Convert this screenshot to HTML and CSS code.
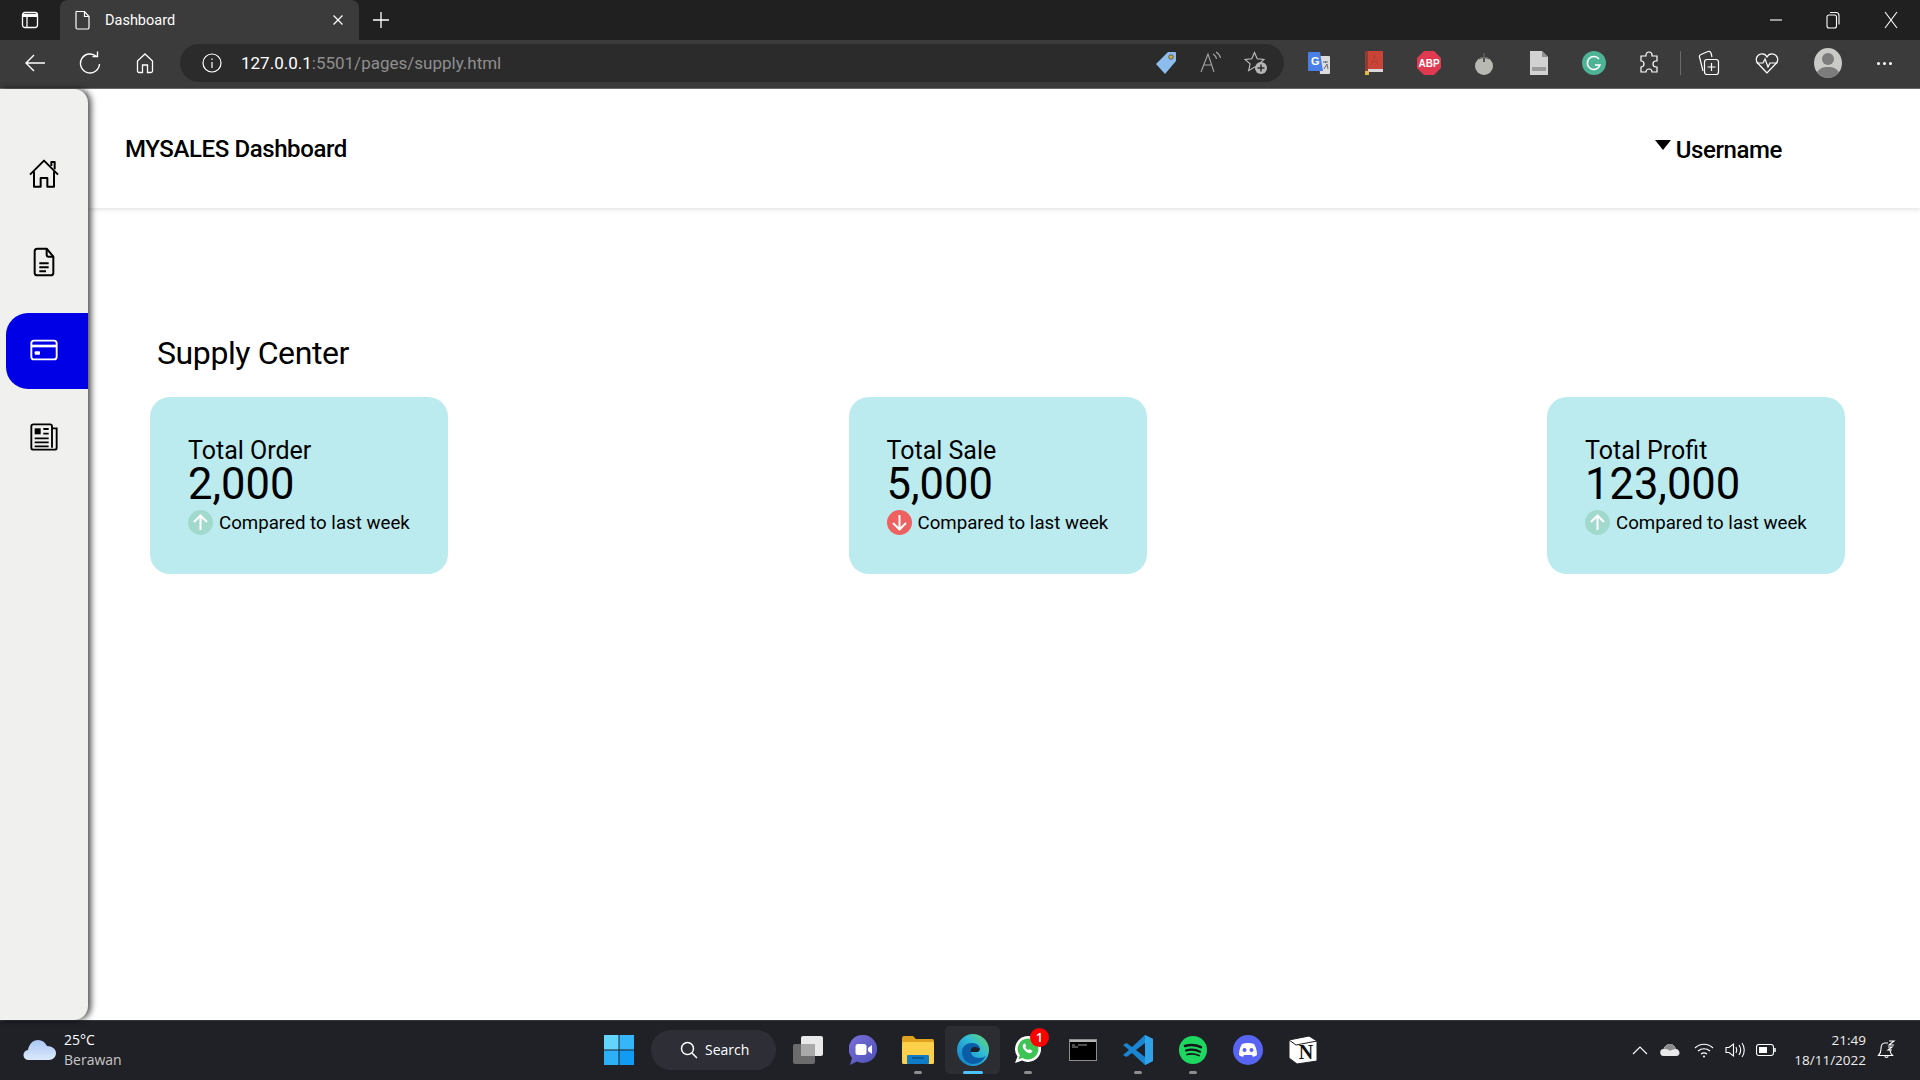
FILE: index.html
```html
<!DOCTYPE html>
<html lang="en">
<head>
    <meta charset="UTF-8">
    <title>Dashboard</title>
    <link rel="stylesheet" href="styles.css">
</head>
<body>
    <div class="tabbar">
        <div class="tab-toggle">
            <svg class="ico" width="20" height="20" viewBox="0 0 20 20" fill="none" stroke="#fff" stroke-width="1.3"><rect x="2.5" y="2.5" width="15" height="15" rx="2.5"/><path d="M2.5 5.5h15" stroke-width="3"/><path d="M7 6v11"/></svg>
        </div>
        <div class="tab">
            <svg class="ico" width="16" height="20" viewBox="0 0 16 20" fill="none" stroke="#fff" stroke-width="1.2"><path d="M2.5 1.5h7l4.500 5v11a1.500 1.500 0 0 1-1.500 1.500h-10a1.500 1.500 0 0 1-1.500-1.500v-15a1 1 0 0 1 1.500-1z"/><path d="M9.500 1.500v5h4.500"/></svg>
            <span class="tab-title">Dashboard</span>
            <svg class="tab-close" width="12" height="12" viewBox="0 0 12 12" stroke="#fff" stroke-width="1.200"><path d="M1.500 1.500l9 9M10.500 1.500l-9 9"/></svg>
        </div>
        <svg class="tab-new" width="18" height="18" viewBox="0 0 18 18" stroke="#fff" stroke-width="1.300"><path d="M9 1v16M1 9h16"/></svg>
        <div class="win-btns">
            <svg width="12" height="12" viewBox="0 0 12 12" stroke="#fff" stroke-width="1.100"><path d="M0 6h12"/></svg>
            <svg width="14" height="18" viewBox="0 0 14 18" fill="none" stroke="#fff" stroke-width="1.100"><rect x="1" y="4" width="9.500" height="13" rx="2"/><path d="M4 1.500h6a3 3 0 0 1 3 3v9"/></svg>
            <svg width="14" height="18" viewBox="0 0 14 18" stroke="#fff" stroke-width="1.100"><path d="M1 1l12 16M13 1L1 17"/></svg>
        </div>
    </div>

    <div class="toolbar">
        <div class="tool">
            <svg width="22" height="22" viewBox="0 0 22 22" fill="none" stroke="#fff" stroke-width="1.400"><path d="M21 11H2M10 3l-8 8 8 8"/></svg>
        </div>
        <div class="tool">
            <svg width="22" height="24" viewBox="0 0 22 24" fill="none" stroke="#fff" stroke-width="1.400"><path d="M17.500 5.500A9.500 9.500 0 1 0 20.500 13"/><path d="M13.500 5.500h5v-5"/></svg>
        </div>
        <div class="tool">
            <svg width="20" height="22" viewBox="0 0 20 22" fill="none" stroke="#fff" stroke-width="1.300"><path d="M10 2l7.500 7v10a1.500 1.500 0 0 1-1.500 1.500h-3.500V13h-5v7.500H4A1.500 1.500 0 0 1 2.500 19V9z"/></svg>
        </div>
        <div class="omnibox">
            <svg class="omni-info" width="20" height="20" viewBox="0 0 20 20" fill="none" stroke="#fff" stroke-width="1.200"><circle cx="10" cy="10" r="9"/><path d="M10 9v6M10 5.500v1.500"/></svg>
            <span class="url"><span class="url-host">127.0.0.1</span>:5501/pages/supply.html</span>
            <div class="omni-tools">
                <div class="omni-tool">
                    <svg width="22" height="24" viewBox="0 0 22 24"><path d="M13 1h7a1 1 0 0 1 1 1v8L10 23 1 13z" fill="#8cbdec"/><circle cx="16" cy="6" r="2.200" fill="#d8b23c" stroke="#333" stroke-width=".7"/></svg>
                </div>
                <div class="omni-tool">
                    <svg width="24" height="22" viewBox="0 0 24 22" fill="none" stroke="#a8a8a8" stroke-width="1.100"><path d="M2 21L9 3l6 18M5 14h8"/><path d="M14 3c2 1 3 2.500 3.500 5M17 1c2.500 1.500 4 3.500 4.500 6"/></svg>
                </div>
                <div class="omni-tool">
                    <svg width="24" height="24" viewBox="0 0 24 24" fill="none" stroke="#c0c0c0" stroke-width="1.100"><path d="M10.500 1.500l2.700 6.300 6.800.600-5.100 4.500 1.500 6.700-5.900-3.500-5.900 3.500 1.500-6.700L1 8.400l6.800-.600z"/><circle cx="17" cy="17" r="6" fill="#b5b5b5" stroke="none"/><path d="M17 13.500v7M13.500 17h7" stroke="#2b2b2b" stroke-width="1.500"/></svg>
                </div>
            </div>
        </div>
        <div class="tool ext-first">
            <svg width="24" height="24" viewBox="0 0 24 24"><path d="M12 5h10a1 1 0 0 1 1 1v16a1 1 0 0 1-1 1H13z" fill="#dcdcdc"/><path d="M2 1h11l3 19H2a1 1 0 0 1-1-1V2a1 1 0 0 1 1-1z" fill="#4a7fe8"/><text class="ext-g" x="4" y="14">G</text><path d="M16 11h5M18.500 10v2M17 18l3-5 1 5" stroke="#667" stroke-width="1" fill="none"/></svg>
        </div>
        <div class="tool">
            <svg width="20" height="24" viewBox="0 0 20 24"><rect x="1" y="0" width="18" height="20" fill="#c94436"/><rect x="1" y="0" width="3" height="22" fill="#8a3d34"/><rect x="4" y="18" width="15" height="3" fill="#d8d8d8"/><rect x="1" y="20" width="4" height="4" fill="#e8b93a"/><path d="M7 14l3.500-10L14 14M8.500 10.500h4" stroke="#b33c2f" fill="none"/></svg>
        </div>
        <div class="tool">
            <svg width="24" height="24" viewBox="0 0 24 24"><path d="M7 0h10l7 7v10l-7 7H7l-7-7V7z" fill="#e03a50"/><text class="ext-abp" x="12" y="16" text-anchor="middle">ABP</text></svg>
        </div>
        <div class="tool">
            <svg width="20" height="24" viewBox="0 0 20 24"><ellipse cx="10" cy="15" rx="9" ry="9" fill="#b9b9b4"/><path d="M10 2v9" stroke="#555" stroke-width="2"/><path d="M5 8c2-2 8-2 10 0" stroke="#666" stroke-width="1.500" fill="none"/></svg>
        </div>
        <div class="tool">
            <svg width="18" height="24" viewBox="0 0 18 24"><path d="M0 0h12l6 6v18H0z" fill="#d2d2d2"/><path d="M12 0l6 6h-6z" fill="#8f8f8f"/><rect x="2" y="16" width="14" height="4" fill="#9a9a9a"/></svg>
        </div>
        <div class="tool">
            <svg width="24" height="24" viewBox="0 0 24 24" fill="none"><circle cx="12" cy="12" r="12" fill="#4db394"/><path d="M17 8a6.500 6.500 0 1 0 1 6h-5" stroke="#fff" stroke-width="1.600"/></svg>
        </div>
        <div class="tool">
            <svg width="22" height="24" viewBox="0 0 22 24" fill="none" stroke="#fff" stroke-width="1.200"><path d="M8 4a3 3 0 0 1 6 0v1h5v5h-1a3 3 0 0 0 0 6h1v5h-5a3 3 0 0 0-6 0H3v-5a3 3 0 0 0 0-6V5h5z"/></svg>
        </div>
        <div class="tool-sep"></div>
        <div class="tool tool-coll">
            <svg width="22" height="26" viewBox="0 0 22 26" fill="none" stroke="#fff" stroke-width="1.200"><path d="M5 21L1.500 7a2 2 0 0 1 1.500-2.500l7-3c1.500-.500 2.500 0 3 1.500l1 4"/><rect x="6.500" y="9.500" width="14" height="15" rx="2.500"/><path d="M13.500 13v8M9.500 17h8"/></svg>
        </div>
        <div class="tool tool-health">
            <svg width="24" height="24" viewBox="0 0 24 24" fill="none" stroke="#fff" stroke-width="1.200"><path d="M12 22L3 12.500C0 9.500 1 4 6 3c3-.500 5 1 6 3 1-2 3-3.500 6-3 5 1 6 6.500 3 9.500z"/><path d="M1.500 12H8l2-4 3 8 2-4h7.500"/></svg>
        </div>
        <div class="avatar">
            <svg width="28" height="30" viewBox="0 0 28 30"><ellipse cx="14" cy="15" rx="14" ry="15" fill="#c9c9c6"/><circle cx="14" cy="11" r="6" fill="#7c7c7c"/><path d="M3 25c2-5 6-6 11-6s9 1 11 6c-3 3-7 5-11 5s-8-2-11-5z" fill="#7c7c7c"/></svg>
        </div>
        <div class="dots"><i></i><i></i><i></i></div>
    </div>

    <div class="page">
        <nav class="sidebar">
            <a class="side-item">
                <svg width="32" height="32" viewBox="0 0 24 24" fill="none" stroke="#000" stroke-width="1.500" stroke-linejoin="round"><path d="M1.500 12.500L12 2l10.500 10.500"/><path d="M4.500 10v11.500h5V15h5v6.500h5V10"/><path d="M17.500 6V3H20v5.500"/></svg>
            </a>
            <a class="side-item">
                <svg width="32" height="32" viewBox="0 0 24 24" fill="none" stroke="#000" stroke-width="1.500" stroke-linejoin="round"><path d="M14 2H7a2 2 0 0 0-2 2v16a2 2 0 0 0 2 2h10a2 2 0 0 0 2-2V8z"/><path d="M14 2v4.500a1.500 1.500 0 0 0 1.500 1.500H19M8.500 13h7M8.500 16h7M8.500 19h5"/></svg>
            </a>
            <a class="side-item side-item-active">
                <svg width="32" height="32" viewBox="0 0 24 24" fill="none" stroke="#fff" stroke-width="1.400"><rect x="2.500" y="5" width="19" height="14" rx="2"/><path d="M2.500 9h19" stroke-width="2"/><rect x="5" y="13" width="4" height="2.500" rx=".7" fill="#fff" stroke="none"/></svg>
            </a>
            <a class="side-item">
                <svg width="32" height="32" viewBox="0 0 24 24" fill="none" stroke="#000" stroke-width="1.400"><path d="M18 5.500V4a1.500 1.500 0 0 0-1.500-1.500H4A1.500 1.500 0 0 0 2.500 4v16A1.500 1.500 0 0 0 4 21.500h16a1.500 1.500 0 0 0 1.500-1.500V5.500H18v14.500"/><rect x="5" y="5.500" width="4.500" height="4.500" fill="#000" stroke="none"/><path d="M11.500 6h4M11.500 9.500h4M5 13h10.500M5 16h10.500M5 19h10.500"/></svg>
            </a>
        </nav>
        <main class="content">
            <header class="topbar">
                <div class="brand">MYSALES Dashboard</div>
                <div class="user"><span class="caret"></span>Username</div>
            </header>
            <h2 class="page-title">Supply Center</h2>
            <section class="cards">
                <div class="card">
                    <div class="card-label">Total Order</div>
                    <div class="card-value">2,000</div>
                    <div class="card-note">
                        <svg class="trend" width="25" height="25" viewBox="0 0 25 25"><circle cx="12.500" cy="12.500" r="12.500" fill="#a2d9cd"/><path d="M12.500 20V6M6 12l6.500-6.500L19 12" fill="none" stroke="#fff" stroke-width="2"/></svg>
                        Compared to last week
                    </div>
                </div>
                <div class="card">
                    <div class="card-label">Total Sale</div>
                    <div class="card-value">5,000</div>
                    <div class="card-note">
                        <svg class="trend" width="25" height="25" viewBox="0 0 25 25"><circle cx="12.500" cy="12.500" r="12.500" fill="#ee6161"/><path d="M12.500 5v14M6 13l6.500 6.500L19 13" fill="none" stroke="#fff" stroke-width="2"/></svg>
                        Compared to last week
                    </div>
                </div>
                <div class="card">
                    <div class="card-label">Total Profit</div>
                    <div class="card-value">123,000</div>
                    <div class="card-note">
                        <svg class="trend" width="25" height="25" viewBox="0 0 25 25"><circle cx="12.500" cy="12.500" r="12.500" fill="#a2d9cd"/><path d="M12.500 20V6M6 12l6.500-6.500L19 12" fill="none" stroke="#fff" stroke-width="2"/></svg>
                        Compared to last week
                    </div>
                </div>
            </section>
        </main>
    </div>

    <footer class="taskbar">
        <div class="weather">
            <svg width="34" height="22" viewBox="0 0 34 22"><defs><linearGradient id="cloud" x1="0" y1="0" x2="0" y2="1"><stop offset="0" stop-color="#a9c8f5"/><stop offset="1" stop-color="#dbe8fb"/></linearGradient></defs><path d="M6 21a5 5 0 0 1-1-10C6 5 10 1 15 1c4 0 7 2 9 6 5 0 9 3 9 7s-3 7-7 7z" fill="url(#cloud)"/></svg>
            <div class="weather-text">
                <div class="weather-temp">25°C</div>
                <div class="weather-desc">Berawan</div>
            </div>
        </div>
        <div class="task-apps">
            <svg class="start" width="30" height="30" viewBox="0 0 30 30"><rect width="14.500" height="14.500" fill="#63d4fb"/><rect x="15.500" width="14.500" height="14.500" fill="#36b6f8"/><rect y="15.500" width="14.500" height="14.500" fill="#2db0f7"/><rect x="15.500" y="15.500" width="14.500" height="14.500" fill="#129bf3"/></svg>
            <div class="search">
                <svg width="18" height="18" viewBox="0 0 18 18" fill="none" stroke="#fff" stroke-width="1.500"><circle cx="7.500" cy="7.500" r="6"/><path d="M12 12l5 5"/></svg>
                <span>Search</span>
            </div>
            <div class="app app-tasks">
                <svg width="30" height="28" viewBox="0 0 30 28"><rect x="0" y="8" width="22" height="20" rx="2" fill="#6b6b6b"/><rect x="8" y="0" width="22" height="20" rx="2" fill="#e9e9e9"/><rect x="8" y="8" width="14" height="12" fill="#a9a9a9"/></svg>
            </div>
            <div class="app">
                <svg width="28" height="30" viewBox="0 0 28 30"><defs><linearGradient id="chat" x1="0" y1="0" x2="1" y2="1"><stop offset="0" stop-color="#7b6fd8"/><stop offset="1" stop-color="#4c4fb8"/></linearGradient></defs><path d="M14 0a14 14 0 1 1-6 26.600L1 30l2-7A14 14 0 0 1 14 0z" fill="url(#chat)"/><rect x="6.500" y="9" width="11" height="11" rx="2.500" fill="#fff"/><path d="M19 13l4-3v9l-4-3z" fill="#fff"/></svg>
            </div>
            <div class="app">
                <svg width="32" height="28" viewBox="0 0 32 28"><path d="M0 2a2 2 0 0 1 2-2h9l3 3h16a2 2 0 0 1 2 2v4H0z" fill="#e0a21f"/><rect y="6" width="32" height="22" rx="1.500" fill="#fbd14b"/><rect x="5" y="19" width="22" height="9" rx="1" fill="#0f7cc8"/><path d="M10 22h12" stroke="#0b4f85" stroke-width="1.500"/></svg>
                <i class="app-dot"></i>
            </div>
            <div class="app app-active">
                <svg width="32" height="32" viewBox="0 0 32 32"><defs><linearGradient id="edge" x1="0" y1="1" x2="1" y2="0"><stop offset="0" stop-color="#1278c8"/><stop offset=".6" stop-color="#2fbcd8"/><stop offset="1" stop-color="#6ed65a"/></linearGradient></defs><circle cx="16" cy="16" r="16" fill="url(#edge)"/><path d="M5 18c0-6 5-9 10-9 5 0 8 3 8 6 0 2-2 3-4 3h-5c0 3 3 6 8 6 3 0 5-1 7-2-3 5-7 8-13 8C10 30 5 25 5 18z" fill="#0c5da8"/><path d="M14 18c-1-3 1-5 4-5 2 0 4 1 5 2l-2 3z" fill="#1d2027"/></svg>
                <i class="app-dot app-dot-active"></i>
            </div>
            <div class="app">
                <svg width="28" height="30" viewBox="0 0 28 30"><path d="M14 1a13 13 0 1 1-6 24.500L1 28l2.500-6.500A13 13 0 0 1 14 1z" fill="#fff"/><path d="M14 3.500a10.500 10.500 0 1 1-5.500 19.500l-4 1.200 1.300-4A10.500 10.500 0 0 1 14 3.500z" fill="#3ec454"/><path d="M9.500 9c-1.500 1.500-1 4 1.500 6.500s5 3.500 6.500 2l1-1.500-3-2-1.200 1c-1.500-.500-2.500-1.800-3-3l1-1.200-1.500-2.500z" fill="#fff"/></svg>
                <span class="app-badge">1</span>
                <i class="app-dot"></i>
            </div>
            <div class="app">
                <svg width="28" height="22" viewBox="0 0 28 22"><rect width="28" height="22" fill="#8d8d8d"/><rect x="1" y="1" width="26" height="20" fill="#000"/><rect x="1" y="1" width="26" height="2" fill="#b5b5b5"/><path d="M3 6h3M3 8h6M9 6h9" stroke="#9a9a9a"/></svg>
            </div>
            <div class="app">
                <svg width="30" height="30" viewBox="0 0 30 30"><path d="M22 0l8 4v22l-8 4-13-12-5.500 4L0 20l6-5-6-5 3.500-2L9 12z" fill="#1a85d0"/><path d="M22 8v14l-9-7z" fill="#1d2027"/><path d="M22 0l8 4v22l-8 4z" fill="#2ea3ec"/></svg>
                <i class="app-dot"></i>
            </div>
            <div class="app">
                <svg width="28" height="28" viewBox="0 0 28 28" fill="none" stroke="#14161a"><circle cx="14" cy="14" r="14" fill="#1ed760" stroke="none"/><path d="M6 10c5-1.500 11-1.200 16 1.200" stroke-width="2.500" stroke-linecap="round"/><path d="M7 14.500c4.500-1.200 10-.800 14 1.200" stroke-width="2.200" stroke-linecap="round"/><path d="M8 18.500c4-1 8-.600 12 1" stroke-width="1.800" stroke-linecap="round"/></svg>
                <i class="app-dot"></i>
            </div>
            <div class="app">
                <svg width="30" height="30" viewBox="0 0 30 30"><circle cx="15" cy="15" r="15" fill="#5865f2"/><path d="M9 9c4-1.500 8-1.500 12 0 2 3 3 7 3 11-1.500 1-3 1.500-4 2l-1-2h-8l-1 2c-1-.500-2.500-1-4-2 0-4 1-8 3-11z" fill="#fff"/><circle cx="11.500" cy="15" r="2" fill="#5865f2"/><circle cx="18.500" cy="15" r="2" fill="#5865f2"/></svg>
            </div>
            <div class="app">
                <svg width="30" height="30" viewBox="0 0 30 30"><path d="M1 5l20-4 8 5v20l-20 3-8-6z" fill="#fff" stroke="#222"/><path d="M1 5l7 5 21-4" fill="none" stroke="#222"/><text class="notion-n" x="18" y="24" text-anchor="middle">N</text></svg>
            </div>
        </div>
        <div class="tray">
            <svg class="tray-chevron" width="16" height="10" viewBox="0 0 16 10" fill="none" stroke="#fff" stroke-width="1.100"><path d="M1 9l7-7 7 7"/></svg>
            <svg class="tray-cloud" width="20" height="14" viewBox="0 0 20 14"><path d="M4 13a3.500 3.500 0 0 1-.500-7C4.500 3 7 1 10 1c3 0 5 2 6 5 2 0 3.500 2 3.500 4s-1.500 3-3 3z" fill="#e8e8e8"/><path d="M4 6c1-3 3-5 6-5 3 0 5 2 6 5-3 0-5 1-6 2-1-1.500-3-2-6-2z" fill="#8b8b8b"/></svg>
            <svg class="tray-wifi" width="20" height="16" viewBox="0 0 20 16" fill="none" stroke="#fff" stroke-width="1.200"><path d="M1 6c5-5 13-5 18 0M4 9c3.500-3 8.500-3 12 0M7 12c1.800-1.400 4.200-1.400 6 0"/><circle cx="10" cy="14.500" r="1" fill="#fff" stroke="none"/></svg>
            <svg class="tray-vol" width="20" height="16" viewBox="0 0 20 16" fill="none" stroke="#fff" stroke-width="1.100"><path d="M1 5.500h3L8.500 2v12L4 10.500H1z"/><path d="M11 5c1 2 1 4 0 6M14 3c2 3 2 7 0 10M17 1c3 4 3 10 0 14"/></svg>
            <svg class="tray-batt" width="20" height="12" viewBox="0 0 20 12" fill="none" stroke="#fff" stroke-width="1.100"><rect x=".5" y=".5" width="17" height="11" rx="2.500"/><rect x="3" y="3" width="8" height="6" fill="#fff" stroke="none"/><path d="M19 4v4" stroke-width="1.500"/></svg>
            <div class="clock">
                <div>21:49</div>
                <div>18/11/2022</div>
            </div>
            <svg class="tray-bell" width="20" height="20" viewBox="0 0 20 20" fill="none" stroke="#fff" stroke-width="1.100"><path d="M11 3H8C5 3 4 6 4 9c0 3-1 5-2.500 6.500h14C14 14 13 12 13 10"/><path d="M8 16c0 2 3 2 3 0"/><path d="M12 1h5l-5 4h5M11 7h4l-4 3h4"/></svg>
        </div>
    </footer>
</body>
</html>
```

FILE: styles.css
```css
* { box-sizing: border-box; }
html, body { height: 100%; }
body { margin: 0; display: flex; flex-direction: column; height: 100vh; overflow: hidden; background: #fff; color: #000; font-family: Roboto, "Noto Sans", sans-serif; }
svg { display: block; flex: none; }

/* browser chrome */
.tabbar { height: 40px; background: #202020; display: flex; align-items: center; }
.tab-toggle { width: 60px; height: 40px; display: flex; align-items: center; justify-content: center; }
.tab { width: 299px; height: 40px; background: #3b3b3b; border-radius: 8px 8px 0 0; display: flex; align-items: center; padding: 0 15px 0 15px; }
.tab-title { color: #fff; font-size: 14.5px; margin-left: 14px; flex: 1; }
.tab-new { margin-left: 13px; }
.win-btns { margin-left: auto; width: 174px; display: flex; align-items: center; justify-content: space-between; padding: 0 22px 0 24px; }

.toolbar { height: 49px; background: #3b3b3b; border-bottom: 1px solid #6b6b6b; display: flex; align-items: center; padding-left: 7px; padding-bottom: 2px; }
.tool { width: 55px; height: 40px; display: flex; align-items: center; justify-content: center; }
.ext-first { margin-left: 7px; }
.tool-health { margin-left: 3px; }
.tool-sep { width: 1px; height: 24px; background: #6b6b6b; margin-left: 4px; margin-right: 0; }
.omnibox { width: 1104px; height: 38px; margin-left: 8px; background: #2b2b2b; border-radius: 19px; display: flex; align-items: center; padding-left: 22px; }
.url { margin-left: 19px; color: #8f8f8f; font-size: 17px; }
.url-host { color: #fff; }
.omni-tools { margin-left: auto; display: flex; padding-right: 6px; }
.omni-tool { width: 45px; display: flex; justify-content: center; }
.avatar { margin-left: 20px; width: 28px; }
.dots { margin-left: 35px; display: flex; gap: 3px; }
.dots i { width: 3px; height: 3px; border-radius: 50%; background: #fff; }
.ext-g { font: 700 11px "Liberation Sans", sans-serif; fill: #fff; }
.ext-abp { font: 700 10px "Liberation Sans", sans-serif; fill: #fff; }
.notion-n { font: 700 20px "Liberation Serif", serif; fill: #111; }

/* page */
.page { flex: 1; display: flex; min-height: 0; }
.sidebar { width: 88px; flex: none; background: #f0f0ee; border-radius: 0 14px 14px 0; box-shadow: 3px 0 6px rgba(0, 0, 0, 0.7); padding: 47px 0 0 6px; display: flex; flex-direction: column; gap: 13px; position: relative; z-index: 1; }
.side-item { height: 75px; display: flex; align-items: center; justify-content: center; padding-right: 7px; border-radius: 22px 0 0 22px; }
.side-item-active { height: 76px; background: #0000e6; margin: 1px 0 -3px; padding-bottom: 3px; }
.content { flex: 1; min-width: 0; }
.topbar { height: 119px; display: flex; align-items: center; justify-content: space-between; padding: 0 138px 0 37px; box-shadow: 0 2px 4px rgba(0, 0, 0, 0.1); }
.brand, .user { font-size: 24px; font-weight: 500; letter-spacing: -0.4px; }
.user { display: flex; align-items: center; position: relative; padding-top: 2px; }
.caret { width: 0; height: 0; border-left: 8px solid transparent; border-right: 8px solid transparent; border-top: 10px solid #000; margin-right: 5px; margin-top: -10px; }
.page-title { margin: 126px 0 24px 69px; font-size: 32px; font-weight: 400; line-height: 39px; letter-spacing: -0.4px; }
.cards { display: flex; justify-content: space-between; margin: 0 75px 0 62px; }
.card { width: 298px; height: 177px; background: #bbebee; border-radius: 20px; padding: 40px 0 0 38px; }
.card-label { font-size: 25px; line-height: 28px; }
.card-value { font-size: 43.5px; line-height: 40px; }
.card-note { display: flex; align-items: center; gap: 6px; font-size: 18.7px; margin-top: 5px; }

/* taskbar */
.taskbar { height: 60px; flex: none; background: #1f2127; border-top: 1px solid #34363c; padding-bottom: 2px; display: flex; align-items: center; position: relative; color: #fff; font-family: "Open Sans", "Noto Sans", sans-serif; }
.weather { width: 604px; display: flex; align-items: center; gap: 7px; padding-left: 23px; }
.weather-text { font-size: 14px; line-height: 20px; }
.weather-desc { color: #c8c8c8; }
.task-apps { display: flex; align-items: center; }
.start { margin-right: 17px; }
.search { width: 125px; height: 40px; background: #2e2f36; border-radius: 20px; display: flex; align-items: center; padding-left: 29px; gap: 7px; font-size: 14px; }
.app { width: 55px; height: 48px; display: flex; align-items: center; justify-content: center; position: relative; border-radius: 5px; }
.app-tasks { margin-left: 4px; }
.app-active { background: #2b2d33; }
.app-dot { position: absolute; bottom: 0; left: 50%; width: 8px; height: 3px; margin-left: -4px; border-radius: 2px; background: #8d8d8d; }
.app-dot-active { width: 20px; margin-left: -10px; background: #4cc2ff; }
.app-badge { position: absolute; top: 2px; right: 6px; width: 19px; height: 19px; border-radius: 50%; background: #f00; color: #fff; font-size: 13px; font-weight: 600; line-height: 19px; text-align: center; }
.tray { margin-left: auto; display: flex; align-items: center; padding-right: 23px; }
.tray-cloud { margin-left: 12px; }
.tray-wifi { margin-left: 14px; }
.tray-vol { margin-left: 11px; }
.tray-batt { margin-left: 11px; }
.clock { width: 90px; text-align: right; font-size: 13.5px; line-height: 20px; color: #eee; }
.tray-bell { margin-left: 11px; }
```
